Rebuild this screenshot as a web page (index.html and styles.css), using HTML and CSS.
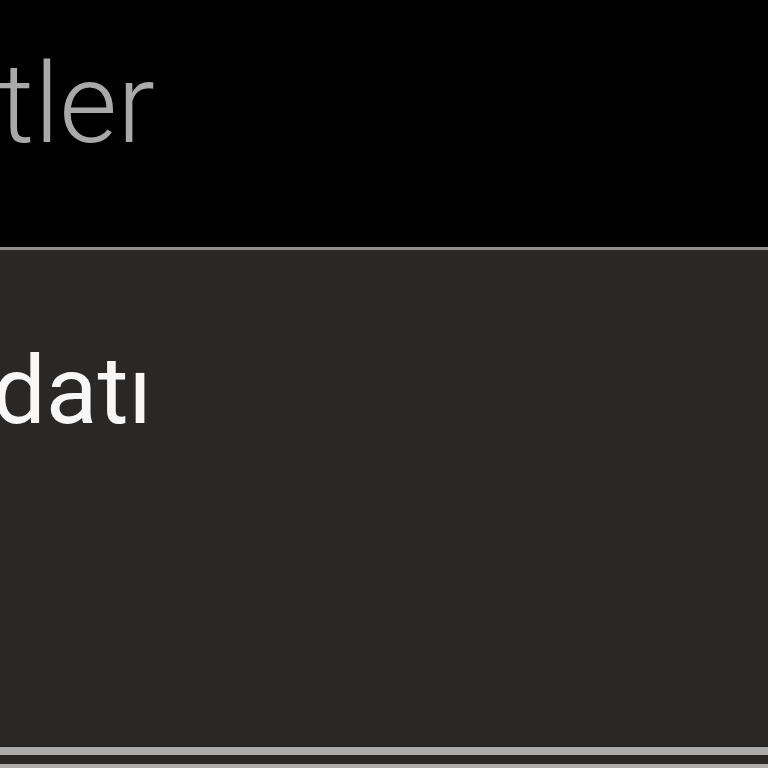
FILE: index.html
```html
<!DOCTYPE html>
<html lang="tr">
<head>
<meta charset="utf-8">
<link rel="stylesheet" href="styles.css">
</head>
<body>
<div class="page">
  <header class="header">
    <div class="title-box"><span class="title">Hizmetler</span></div>
  </header>
  <section class="panel">
    <div class="item-box"><span class="item">Randevu kaydatı</span></div>
  </section>
  <div class="divider"></div>
  <section class="panel-next"></section>
</div>
</body>
</html>
```

FILE: styles.css
```css
html, body {
  margin: 0;
  padding: 0;
  background: #000;
  overflow: hidden;
}
.page {
  width: 768px;
  height: 768px;
  display: flex;
  flex-direction: column;
  font-family: Roboto, "Noto Sans", sans-serif;
}
.header {
  height: 247px;
  flex: none;
  background: #000;
  border-bottom: 3px solid #8e8e8e;
}
.title-box {
  width: 155px;
  display: flex;
  justify-content: flex-end;
  padding-top: 48px;
}
.title {
  white-space: nowrap;
  font-size: 112px;
  line-height: 1;
  font-weight: 300;
  color: #a9a9a9;
}
.panel {
  height: 496px;
  flex: none;
  background: #292827;
  border-bottom: 1px solid #1e1d1c;
}
.item-box {
  width: 152px;
  display: flex;
  justify-content: flex-end;
  padding-top: 93px;
}
.item {
  white-space: nowrap;
  font-size: 95px;
  line-height: 1;
  font-weight: 400;
  color: #f7f7f7;
}
.divider {
  height: 8px;
  flex: none;
  background: #acacac;
}
.panel-next {
  flex: none;
  height: 9px;
  background: #292827;
  border-bottom: 4px solid #acacac;
}
```
